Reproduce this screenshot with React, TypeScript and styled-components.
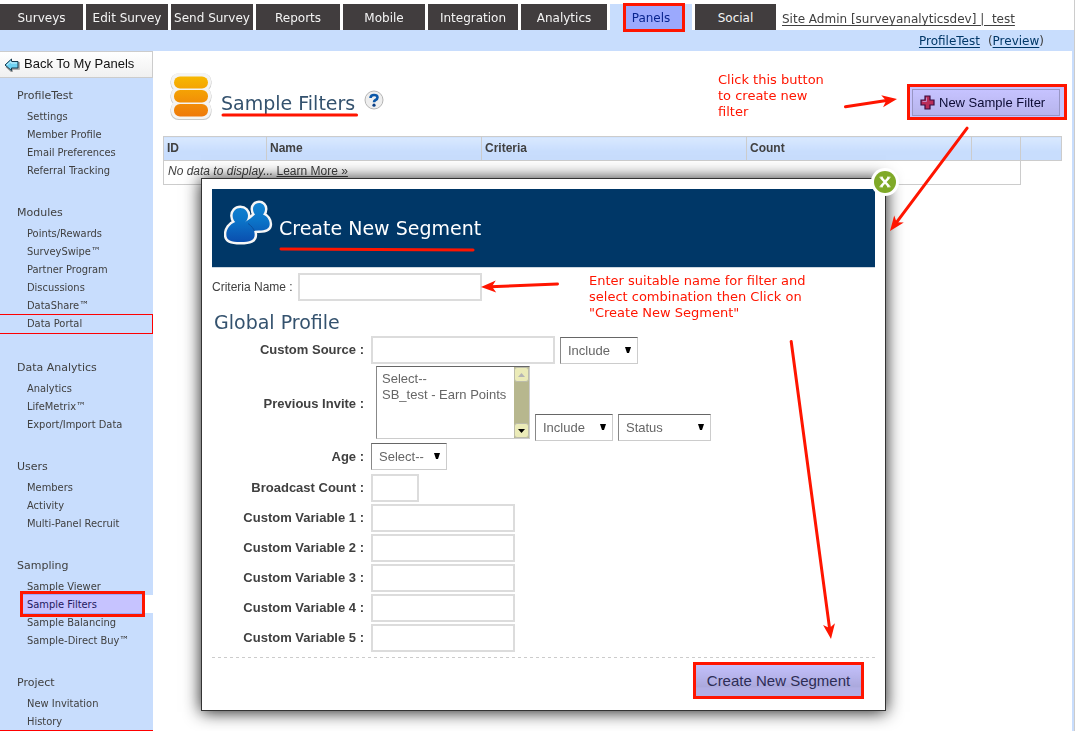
import React from "react";
import styled, { createGlobalStyle, css } from "styled-components";

const wide = '"DejaVu Sans", Verdana, sans-serif';
const narrow = '"DejaVu Sans Condensed", "DejaVu Sans", sans-serif';
const arial = '"Liberation Sans", Arial, sans-serif';
const blue = "#c8ddfd";
const red = "#ff1500";
const ink = "#404040";

const GlobalStyle = createGlobalStyle`
  *, *::before, *::after { box-sizing: border-box; }
  body { margin: 0; background: #fff; color: ${ink}; font: 12px ${arial}; }
`;

const Page = styled.div`
  min-height: 100vh;
  display: flex;
  flex-direction: column;
  border-right: 1px solid #ccc;
`;

/* Red marker frame that tints whatever lies beneath it */
const Marker = styled.span<{ $inset: string }>`
  position: absolute;
  inset: ${(p) => p.$inset};
  border: 3px solid ${red};
  pointer-events: none;
  &::before {
    content: "";
    position: absolute;
    inset: 0;
    background: #c6c3ff;
    mix-blend-mode: multiply;
  }
`;

const TopBar = styled.nav`
  display: flex;
  gap: 3px;
  padding-top: 4px;
`;

const Tab = styled.a<{ $width: number; $active?: boolean }>`
  position: relative;
  width: ${(p) => p.$width}px;
  height: 26px;
  line-height: 28px;
  text-align: center;
  white-space: nowrap;
  text-decoration: none;
  font-family: ${wide};
  font-size: 12px;
  color: ${(p) => (p.$active ? "#0b2f8f" : "#f4f4f4")};
  background: ${(p) => (p.$active ? blue : "#413d3e")};
`;

const Account = styled.a`
  height: 26px;
  margin-left: 3px;
  line-height: 30px;
  white-space: pre;
  font-family: ${wide};
  font-size: 12px;
  color: ${ink};
  text-underline-offset: 2px;
`;

const Crumbs = styled.div`
  display: flex;
  justify-content: flex-end;
  gap: 8px;
  height: 21px;
  padding-right: 30px;
  line-height: 22px;
  font-family: ${wide};
  font-size: 12px;
  background: ${blue};
  a { color: #003767; text-underline-offset: 2px; }
`;

const Columns = styled.div`
  flex: 1;
  display: flex;
`;

const Sidebar = styled.aside`
  width: 153px;
  flex: none;
  background: ${blue};
`;

const BackLink = styled.a`
  display: flex;
  align-items: center;
  gap: 4px;
  height: 27px;
  padding: 0 0 2px 4px;
  border: solid #ccc;
  border-width: 1px 1px 1px 0;
  background: linear-gradient(#fff, #f0f0f0);
  color: #111;
  font-size: 13px;
  text-decoration: none;
`;

const Menu = styled.div`
  display: flex;
  flex-direction: column;
  gap: 24px;
  padding-top: 8px;
  border-bottom: 1px solid #f00;
`;

const MenuHead = styled.h2`
  height: 18px;
  margin: 0 0 3px;
  padding-left: 17px;
  font: 11px/20px ${wide};
`;

const MenuList = styled.ul`
  margin: 0;
  padding: 0;
  list-style: none;
`;

const MenuItem = styled.li<{ $outlined?: boolean; $active?: boolean }>`
  position: relative;
  height: ${(p) => (p.$outlined ? 20 : 18)}px;
  margin-left: ${(p) => (p.$active ? 20 : 0)}px;
  padding-left: ${(p) => (p.$active ? 7 : 27)}px;
  font: 11px/20px ${narrow};
  a { color: inherit; text-decoration: none; }
  ${(p) => p.$active && css`background: #fff; color: #2c2660;`}
  ${(p) => p.$outlined && css`
    border: solid #f00;
    border-width: 1px 1px 1px 0;
    line-height: 18px;
  `}
`;

const Main = styled.main`
  position: relative;
  flex: 1;
  min-width: 0;
  padding: 0 10px;
  border-right: 2px solid ${blue};
`;

const TitleRow = styled.header`
  display: flex;
  align-items: flex-start;
  height: 85px;
  padding: 20px 2px 0 5px;
`;

const Heading = styled.h1`
  position: relative;
  margin: 19px 9px 0;
  font: 19px/26px ${wide};
  color: #34526e;
`;

const HelpIcon = styled.svg`
  margin-top: 18px;
`;

const NewFilter = styled.button`
  position: relative;
  display: flex;
  align-items: center;
  gap: 4px;
  width: 148px;
  height: 27px;
  margin: 18px 0 0 auto;
  padding: 0 0 0 7px;
  border: 1px solid #c4c4c4;
  background: linear-gradient(#fff, #ececec);
  color: #0d0d33;
  font: 13px ${arial};
`;

const Grid = styled.table`
  width: 100%;
  border-collapse: collapse;
  table-layout: fixed;
  font-size: 12px;
  th, td {
    height: 24px;
    padding: 0 4px;
    border: 1px solid #ccc;
    text-align: left;
  }
  th { background: linear-gradient(#d9e9ff, ${blue} 60%); padding: 0 3px 1px; }
  td { font-style: italic; padding-bottom: 3px; }
  a { font-style: normal; color: inherit; text-underline-offset: 1px; }
`;

const Dialog = styled.section`
  position: absolute;
  top: 127px;
  left: 48px;
  right: 186px;
  min-width: 560px;
  padding: 10px;
  border: 1px solid #333;
  background: #fff;
  box-shadow: 0 1px 16px rgba(0, 0, 0, 0.9);
`;

const Close = styled.button`
  position: absolute;
  top: -11px;
  right: -14px;
  width: 28px;
  height: 28px;
  padding: 0;
  border: 0;
  background: none;
  svg { display: block; }
`;

const Banner = styled.header`
  display: flex;
  align-items: flex-start;
  gap: 6px;
  height: 79px;
  padding: 9px 0 0 12px;
  border-bottom: 1px solid #ccd6e0;
  background: #003767;
`;

const BannerTitle = styled.h2`
  position: relative;
  margin: 17px 0 0;
  font: 19px/26px ${wide};
  color: #fff;
`;

const Rule = styled.svg<{ $drop: number }>`
  position: absolute;
  left: 0;
  bottom: ${(p) => -p.$drop}px;
  width: 100%;
  height: 6px;
  overflow: visible;
`;

const NameRow = styled.div`
  display: flex;
  align-items: center;
  gap: 5px;
  margin-top: 5px;
`;

const Section = styled.h3`
  margin: 0;
  padding: 8px 0 1px 2px;
  font: 19px/26px ${wide};
  color: #34526e;
`;

const Row = styled.div<{ $tall?: boolean }>`
  display: grid;
  grid-template-columns: 152px 1fr;
  column-gap: 7px;
  align-items: ${(p) => (p.$tall ? "center" : "start")};
  margin-bottom: 2px;
  & > label {
    text-align: right;
    font-size: 13px;
    font-weight: bold;
    line-height: 28px;
  }
`;

const Controls = styled.div<{ $inset?: boolean }>`
  display: flex;
  align-items: flex-end;
  gap: 5px;
  min-height: 28px;
  padding-left: ${(p) => (p.$inset ? 5 : 0)}px;
`;

const AgeControls = styled(Controls)`
  align-items: flex-start;
  min-height: 29px;
`;

const Field = styled.input<{ $width: number }>`
  width: ${(p) => p.$width}px;
  height: 28px;
  border: 2px solid #dcdcdc;
  background: #fff;
  font: 13px ${arial};
`;

const sunken = css`
  border: 1px solid;
  border-color: #666 #ccc #ccc #888;
`;

const PickBox = styled.span<{ $width: number }>`
  position: relative;
  width: ${(p) => p.$width}px;
  height: 27px;
  select {
    appearance: none;
    width: 100%;
    height: 27px;
    padding: 0 7px;
    ${sunken}
    border-radius: 0;
    background: #fff;
    color: #666;
    font: 13px ${arial};
  }
  svg {
    position: absolute;
    top: 10px;
    right: 7px;
    pointer-events: none;
  }
`;

const ListFrame = styled.div`
  display: flex;
  width: 154px;
  height: 73px;
  margin-bottom: 2px;
  ${sunken}
  select {
    appearance: none;
    flex: 1;
    min-width: 0;
    height: 71px;
    padding: 4px 0 0;
    border: 0;
    overflow: hidden;
    color: #666;
    background: #fff;
    font: 13px ${arial};
  }
  option {
    min-height: 16px;
    height: 16px;
    padding: 0 0 0 5px;
    line-height: 16px;
  }
`;

const ScrollBar = styled.div`
  display: flex;
  flex-direction: column;
  justify-content: space-between;
  width: 15px;
  flex: none;
  background: #b7b78e;
`;

const ScrollEnd = styled.span`
  display: flex;
  align-items: center;
  justify-content: center;
  height: 15px;
  border: 1px solid #bcbcaa;
  border-radius: 3px;
  background: #ebebb8;
`;

const Footer = styled.footer`
  display: flex;
  justify-content: flex-end;
  margin-top: 5px;
  padding: 7px 13px 3px 0;
  background: repeating-linear-gradient(90deg, #ccc 0 3px, transparent 3px 6px) top / 100% 1px no-repeat;
`;

const Submit = styled.button`
  position: relative;
  width: 167px;
  height: 33px;
  padding: 0;
  border: 0;
  background: linear-gradient(#fdfdfd, #dcdcdc 70%, #e4e4e4 72%);
  color: #3a3a56;
  font: 15px ${arial};
`;

const Note = styled.p<{ $place: string }>`
  position: absolute;
  inset: ${(p) => p.$place};
  margin: 0;
  white-space: nowrap;
  font: 13px/16px ${wide};
  color: ${red};
`;

const ArrowSvg = styled.svg<{ $place: string }>`
  position: absolute;
  inset: ${(p) => p.$place};
  z-index: 2;
  pointer-events: none;
`;

type ArrowProps = { place: string; w: number; h: number; from: [number, number]; to: [number, number] };

function Arrow({ place, w, h, from, to }: ArrowProps) {
  const dx = to[0] - from[0];
  const dy = to[1] - from[1];
  const len = Math.hypot(dx, dy);
  const angle = (Math.atan2(dy, dx) * 180) / Math.PI;
  return (
    <ArrowSvg $place={place} width={w} height={h} aria-hidden="true">
      <g transform={`translate(${to[0]} ${to[1]}) rotate(${angle})`} fill={red}>
        <line x1={-len + 1.5} y1="0" x2="-9" y2="0" stroke={red} strokeWidth="3" strokeLinecap="round" />
        <polygon points="0,0 -15,-6 -11,0 -15,6" />
      </g>
    </ArrowSvg>
  );
}

function Caret() {
  return (
    <svg width="6" height="6" aria-hidden="true">
      <polygon points="0,0 6,0 4,6 2,6" fill="#000" />
    </svg>
  );
}

function Pick({ width, label, value, id }: { width: number; label: string; value: string; id?: string }) {
  return (
    <PickBox $width={width}>
      <select id={id} aria-label={label}>
        <option>{value}</option>
      </select>
      <Caret />
    </PickBox>
  );
}

const tabs: [string, number][] = [
  ["Surveys", 83],
  ["Edit Survey", 82],
  ["Send Survey", 82],
  ["Reports", 84],
  ["Mobile", 82],
  ["Integration", 90],
  ["Analytics", 86],
  ["Panels", 82],
  ["Social", 81],
];

const menu: [string, string[]][] = [
  ["ProfileTest", ["Settings", "Member Profile", "Email Preferences", "Referral Tracking"]],
  ["Modules", ["Points/Rewards", "SurveySwipe™", "Partner Program", "Discussions", "DataShare™", "Data Portal"]],
  ["Data Analytics", ["Analytics", "LifeMetrix™", "Export/Import Data"]],
  ["Users", ["Members", "Activity", "Multi-Panel Recruit"]],
  ["Sampling", ["Sample Viewer", "Sample Filters", "Sample Balancing", "Sample-Direct Buy™"]],
  ["Project", ["New Invitation", "History"]],
];

function BackIcon() {
  return (
    <svg width="16" height="16" viewBox="0 0 16 16" aria-hidden="true">
      <path d="M2 10.5 L8 16 L8 13 L15 13 L15 6" fill="none" stroke="#999" strokeWidth="1.5" />
      <path d="M1 9 L7.5 3 L7.5 5.5 L14 5.5 L14 12 L7.5 12 L7.5 14.5 Z" fill="#6fd3f3" stroke="#16384c" strokeWidth="1" />
      <path d="M3 9 L7 5.5 L7 7 L13 7" fill="none" stroke="#c9f2ff" strokeWidth="1" />
    </svg>
  );
}

function StackIcon() {
  return (
    <svg width="44" height="50" viewBox="0 0 44 50" aria-hidden="true">
      <defs>
        <linearGradient id="stack" x1="0" y1="0" x2="0" y2="50" gradientUnits="userSpaceOnUse">
          <stop offset="0" stopColor="#f8c000" />
          <stop offset="1" stopColor="#ee720c" />
        </linearGradient>
      </defs>
      <g fill="#c8c8c8">
        <rect x="2.500" y="2.500" width="41" height="18" rx="8" />
        <rect x="2.500" y="16.500" width="41" height="18" rx="8" />
        <rect x="2.500" y="30.500" width="41" height="18.500" rx="8" />
      </g>
      <g fill="#f4f4f4">
        <rect x="3" y="2" width="40" height="18" rx="8" />
        <rect x="3" y="16" width="40" height="18" rx="8" />
        <rect x="3" y="29.500" width="40" height="18.500" rx="8" />
      </g>
      <g fill="url(#stack)">
        <rect x="6" y="5.500" width="34" height="12" rx="6" />
        <rect x="6" y="19" width="34" height="12.500" rx="6" />
        <rect x="6" y="33" width="34" height="12.500" rx="6" />
      </g>
    </svg>
  );
}

function PeopleIcon() {
  const front =
    "M16.300 10 C20.800 10 24 13.500 24 17.700 C24 20.500 22.700 22.700 21.500 24 C27 26 30.700 31 30.700 36.500 C30.700 42.500 26 44 16.500 44 C7 44 2.300 42.500 2.300 36.500 C2.300 31 6 26 11.200 24 C10 22.700 8.600 20.500 8.600 17.700 C8.600 13.500 11.800 10 16.300 10 Z";
  const back =
    "M35 5 C38.500 5 41 7.600 41 11 C41 13.300 40 15.300 39 16.500 C43 18 45.700 22 45.700 26 C45.700 31 41 32.500 35 32.500 L28 33 L21 24 C25 22 28 19 31 16.500 C30 15.300 29 13.300 29 11 C29 7.600 31.500 5 35 5 Z";
  return (
    <svg width="49" height="48" viewBox="0 0 49 48" aria-hidden="true">
      <defs>
        <linearGradient id="people" x1="0" y1="5" x2="0" y2="44" gradientUnits="userSpaceOnUse">
          <stop offset="0" stopColor="#1284d2" />
          <stop offset="0.450" stopColor="#0b74c8" />
          <stop offset="1" stopColor="#0a4eae" />
        </linearGradient>
      </defs>
      <g fill="#f6f6f6" stroke="#f6f6f6" strokeWidth="5" strokeLinejoin="round">
        <path d={back} />
        <path d={front} />
      </g>
      <g fill="url(#people)">
        <path d={back} />
        <path d={front} />
      </g>
      <path d="M24 25.500 C27.500 28 29.500 30.500 30.300 33" fill="none" stroke="#0a4f9c" strokeWidth="1" />
    </svg>
  );
}

export default function App() {
  return (
    <Page>
      <GlobalStyle />
      <TopBar>
        {tabs.map(([name, width]) => (
          <Tab key={name} href="#" $width={width} $active={name === "Panels"}>
            {name}
            {name === "Panels" && <Marker $inset="-1px 7px -2px 13px" />}
          </Tab>
        ))}
        <Account href="#">{"Site Admin [surveyanalyticsdev] |  test"}</Account>
      </TopBar>
      <Crumbs>
        <a href="#">ProfileTest</a>
        <span>
          (<a href="#">Preview</a>)
        </span>
      </Crumbs>
      <Columns>
        <Sidebar>
          <BackLink href="#">
            <BackIcon />
            Back To My Panels
          </BackLink>
          <Menu>
            {menu.map(([head, items]) => (
              <div key={head}>
                <MenuHead>{head}</MenuHead>
                <MenuList>
                  {items.map((item) => (
                    <MenuItem key={item} $outlined={item === "Data Portal"} $active={item === "Sample Filters"}>
                      <a href="#">{item}</a>
                      {item === "Sample Filters" && <Marker $inset="-4px 8px -4px 0" />}
                    </MenuItem>
                  ))}
                </MenuList>
              </div>
            ))}
          </Menu>
        </Sidebar>
        <Main>
          <TitleRow>
            <StackIcon />
            <Heading>
              Sample Filters
              <Rule $drop={2} aria-hidden="true">
                <line x1="2" y1="3" x2="101%" y2="3" stroke={red} strokeWidth="3" strokeLinecap="round" />
              </Rule>
            </Heading>
            <HelpIcon width="20" height="22" viewBox="0 0 20 22" role="img" aria-label="Help">
              <circle cx="10" cy="11" r="9" fill="#eee" stroke="#b5b5b5" strokeWidth="1" />
              <path d="M6.500 9 Q6.500 6 10 6 Q13.500 6 13.500 8.500 Q13.500 10 11.500 11 Q10 11.800 10 13.200" fill="none" stroke="#0b57a8" strokeWidth="2.600" />
              <circle cx="10" cy="16.200" r="1.600" fill="#0b3f85" />
            </HelpIcon>
            <NewFilter type="button">
              <svg width="15" height="15" viewBox="0 0 15 15" aria-hidden="true">
                <path d="M5 1 H10 V5 H14 V10 H10 V14 H5 V10 H1 V5 H5 Z" fill="#f03a58" stroke="#4a1040" strokeWidth="1.200" />
                <path d="M6.500 2.500 V6.500 H2.500" fill="none" stroke="#f9b0c0" strokeWidth="1" />
              </svg>
              New Sample Filter
              <Marker $inset="-6px -8px -5px -6px" />
            </NewFilter>
          </TitleRow>
          <Grid>
            <colgroup>
              <col style={{ width: 103 }} />
              <col style={{ width: 215 }} />
              <col />
              <col style={{ width: 225 }} />
              <col style={{ width: 49 }} />
              <col style={{ width: 41 }} />
            </colgroup>
            <thead>
              <tr>
                <th>ID</th>
                <th>Name</th>
                <th>Criteria</th>
                <th>Count</th>
                <th />
                <th />
              </tr>
            </thead>
            <tbody>
              <tr>
                <td colSpan={5}>
                  No data to display... <a href="#">Learn More »</a>
                </td>
              </tr>
            </tbody>
          </Grid>
          <Note $place="21px auto auto calc(100% - 354px)">
            Click this button
            <br />
            to create new
            <br />
            filter
          </Note>
          <Arrow place="41px 172px auto auto" w={58} h={20} from={[2, 15]} to={[55, 7]} />

          <Dialog role="dialog" aria-label="Create New Segment">
            <Close type="button" aria-label="Close">
              <svg width="28" height="28" viewBox="0 0 28 28" aria-hidden="true">
                <circle cx="14" cy="14" r="14" fill="#fff" />
                <circle cx="14" cy="14" r="11" fill="#7fa928" />
                <path d="M10 9.500 L18 18.500 M18 9.500 L10 18.500" stroke="#fff" strokeWidth="2.600" />
                <path d="M8.500 9.200 H12 M16 9.200 H19.500 M8.500 18.800 H12 M16 18.800 H19.500" stroke="#fff" strokeWidth="1" />
              </svg>
            </Close>
            <Banner>
              <PeopleIcon />
              <BannerTitle>
                Create New Segment
                <Rule $drop={12} aria-hidden="true">
                  <line x1="2" y1="2" x2="96%" y2="3" stroke={red} strokeWidth="3" strokeLinecap="round" />
                </Rule>
              </BannerTitle>
            </Banner>
            <NameRow>
              <label htmlFor="criteria">Criteria Name :</label>
              <Field id="criteria" $width={184} />
            </NameRow>
            <Section>Global Profile</Section>
            <Row>
              <label htmlFor="source">Custom Source :</label>
              <Controls>
                <Field id="source" $width={184} />
                <Pick width={78} label="Source match" value="Include" />
              </Controls>
            </Row>
            <Row $tall>
              <label htmlFor="invite">Previous Invite :</label>
              <Controls $inset>
                <ListFrame>
                  <select id="invite" multiple size={4}>
                    <option>Select--</option>
                    <option>SB_test - Earn Points</option>
                  </select>
                  <ScrollBar aria-hidden="true">
                    <ScrollEnd>
                      <svg width="7" height="4"><polygon points="0,4 7,4 3.500,0" fill="#b4b4b4" /></svg>
                    </ScrollEnd>
                    <ScrollEnd>
                      <svg width="7" height="4"><polygon points="0,0 7,0 3.500,4" fill="#000" /></svg>
                    </ScrollEnd>
                  </ScrollBar>
                </ListFrame>
                <Pick width={78} label="Invite match" value="Include" />
                <Pick width={93} label="Invite status" value="Status" />
              </Controls>
            </Row>
            <Row>
              <label htmlFor="age">Age :</label>
              <AgeControls>
                <Pick id="age" width={76} label="Age" value="Select--" />
              </AgeControls>
            </Row>
            <Row>
              <label htmlFor="broadcast">Broadcast Count :</label>
              <Controls>
                <Field id="broadcast" $width={48} />
              </Controls>
            </Row>
            {[1, 2, 3, 4, 5].map((n) => (
              <Row key={n}>
                <label htmlFor={`variable${n}`}>Custom Variable {n} :</label>
                <Controls>
                  <Field id={`variable${n}`} $width={144} />
                </Controls>
              </Row>
            ))}
            <Footer>
              <Submit type="button">
                Create New Segment
                <Marker $inset="-2px" />
              </Submit>
            </Footer>
            <Note $place="94px auto auto 387px">
              Enter suitable name for filter and
              <br />
              select combination then Click on
              <br />
              "Create New Segment"
            </Note>
            <Arrow place="99px auto auto 276px" w={84} h={20} from={[81, 6]} to={[3, 9]} />
            <Arrow place="auto 47px 68px auto" w={52} h={306} from={[5, 4]} to={[45, 303]} />
          </Dialog>
          <Arrow place="73px 100px auto auto" w={86} h={110} from={[82, 3]} to={[4, 107]} />
        </Main>
      </Columns>
    </Page>
  );
}
